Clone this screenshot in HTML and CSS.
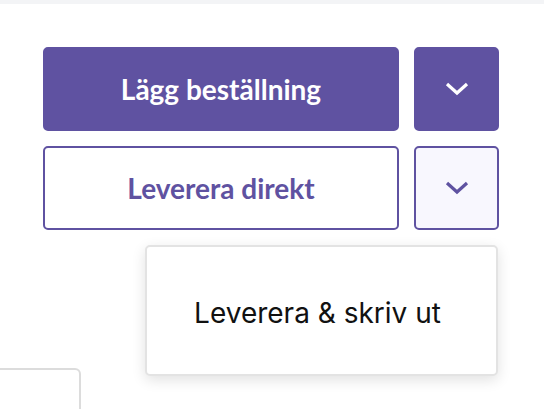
FILE: index.html
```html
<!DOCTYPE html>
<html lang="sv">
<head>
<meta charset="utf-8">
<link rel="stylesheet" href="styles.css">
</head>
<body>
<div class="topbar"></div>
<main class="page">
  <div class="actions">
    <button class="btn btn-primary">Lägg beställning</button>
    <button class="btn btn-primary btn-icon" aria-label="Fler val">
      <svg width="24" height="14" viewBox="0 0 24 14"><path d="M2 2 L12 11 L22 2" fill="none" stroke="currentColor" stroke-width="3.2"/></svg>
    </button>
    <button class="btn btn-outline">Leverera direkt</button>
    <div class="menu-wrap">
      <button class="btn btn-outline btn-icon btn-open" aria-label="Fler val">
        <svg width="24" height="14" viewBox="0 0 24 14"><path d="M2 2 L12 11 L22 2" fill="none" stroke="currentColor" stroke-width="3.2"/></svg>
      </button>
      <div class="menu">
        <div class="menu-item">Leverera &amp; skriv ut</div>
      </div>
    </div>
  </div>
  <div class="card"></div>
</main>
</body>
</html>
```

FILE: styles.css
```css
* { box-sizing: border-box; }
html, body { margin: 0; padding: 0; background: #fff; overflow: hidden; }
body { width: 544px; height: 409px; }
.topbar { height: 4px; background: #f3f4f6; }
.page { padding: 43px 0 0 43px; }
.actions {
  display: grid;
  grid-template-columns: 356px 85px;
  grid-auto-rows: 84px;
  gap: 15px;
}
.btn {
  font-family: Lato, "Liberation Sans", sans-serif;
  font-weight: 700;
  font-size: 28px;
  border-radius: 5px;
  border: 2px solid #5f52a1;
  display: flex;
  align-items: center;
  justify-content: center;
  padding: 0;
  margin: 0;
  cursor: pointer;
  width: 100%;
  height: 100%;
}
.btn-primary { background: #5f52a1; color: #fff; }
.btn-outline { background: #fff; color: #5f52a1; }
.btn-open { background: #f8f7fe; }
.btn-icon svg { display: block; }
.menu-wrap { position: relative; }
.menu {
  position: absolute;
  top: 99px;
  right: 1px;
  width: 353px;
  height: 131px;
  padding: 4px 8px 0 0;
  background: #fff;
  border: 2px solid #e3e3e3;
  border-radius: 5px;
  box-shadow: 0 4px 14px rgba(0,0,0,0.12);
  display: flex;
  align-items: center;
  justify-content: center;
  z-index: 2;
}
.menu-item {
  font-family: Inter, "Noto Sans", sans-serif;
  font-size: 28px;
  color: #111;
}
.card {
  margin-top: 138px;
  margin-left: -50px;
  width: 88px;
  height: 60px;
  border: 2px solid #dcdcdc;
  border-left: none;
  border-top-right-radius: 6px;
}
```
